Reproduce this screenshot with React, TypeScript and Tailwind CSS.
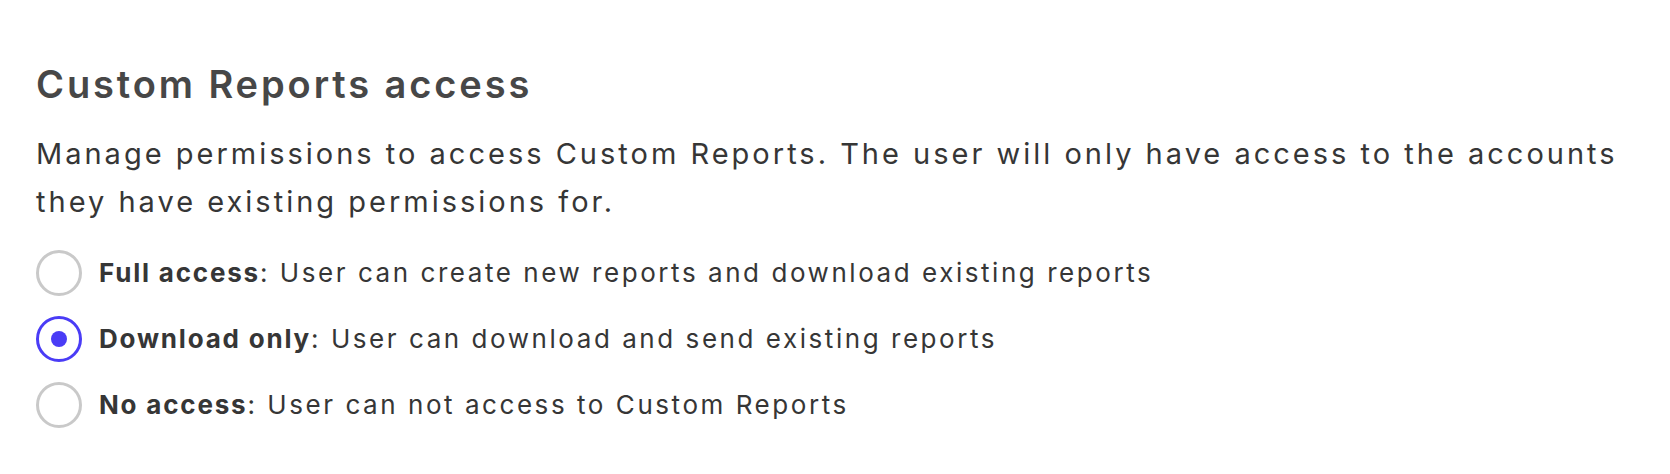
import { useState } from "react";

interface AccessOption {
  id: string;
  label: string;
  description: string;
}

const options: AccessOption[] = [
  { id: "full", label: "Full access", description: "User can create new reports and download existing reports" },
  { id: "download", label: "Download only", description: "User can download and send existing reports" },
  { id: "none", label: "No access", description: "User can not access to Custom Reports" },
];

function RadioRow({ option, checked, onSelect }: { option: AccessOption; checked: boolean; onSelect: () => void }) {
  return (
    <label className="flex items-center gap-[17px] cursor-pointer" onClick={onSelect}>
      <span
        className={
          checked
            ? "flex h-[46px] w-[46px] flex-shrink-0 items-center justify-center rounded-full border-[3px] border-[#4a3cf6]"
            : "flex h-[46px] w-[46px] flex-shrink-0 items-center justify-center rounded-full border-[3px] border-[#c9c9c9]"
        }
      >
        {checked && <span className="h-[16px] w-[16px] rounded-full bg-[#4a3cf6]" />}
      </span>
      <span className="text-[26px] leading-[46px] text-[#363636] tracking-[2.55px] whitespace-nowrap">
        <span className="font-bold tracking-[1.8px]">{option.label}</span>: {option.description}
      </span>
    </label>
  );
}

export default function App() {
  const [selected, setSelected] = useState("download");

  return (
    <div className="min-h-[474px] bg-white pl-[36px] pt-[61px] font-['Inter',sans-serif]">
      <h2 className="text-[38px] leading-[46px] font-semibold text-[#474747] tracking-[2.9px]">Custom Reports access</h2>
      <p className="mt-[23px] w-[1600px] text-[29px] leading-[48px] text-[#363636] tracking-[3px]">
        Manage permissions to access Custom Reports. The user will only have access to the accounts they have existing
        permissions for.
      </p>
      <div className="mt-[24px] flex flex-col gap-[20px]">
        {options.map((o) => (
          <RadioRow key={o.id} option={o} checked={selected === o.id} onSelect={() => setSelected(o.id)} />
        ))}
      </div>
    </div>
  );
}
